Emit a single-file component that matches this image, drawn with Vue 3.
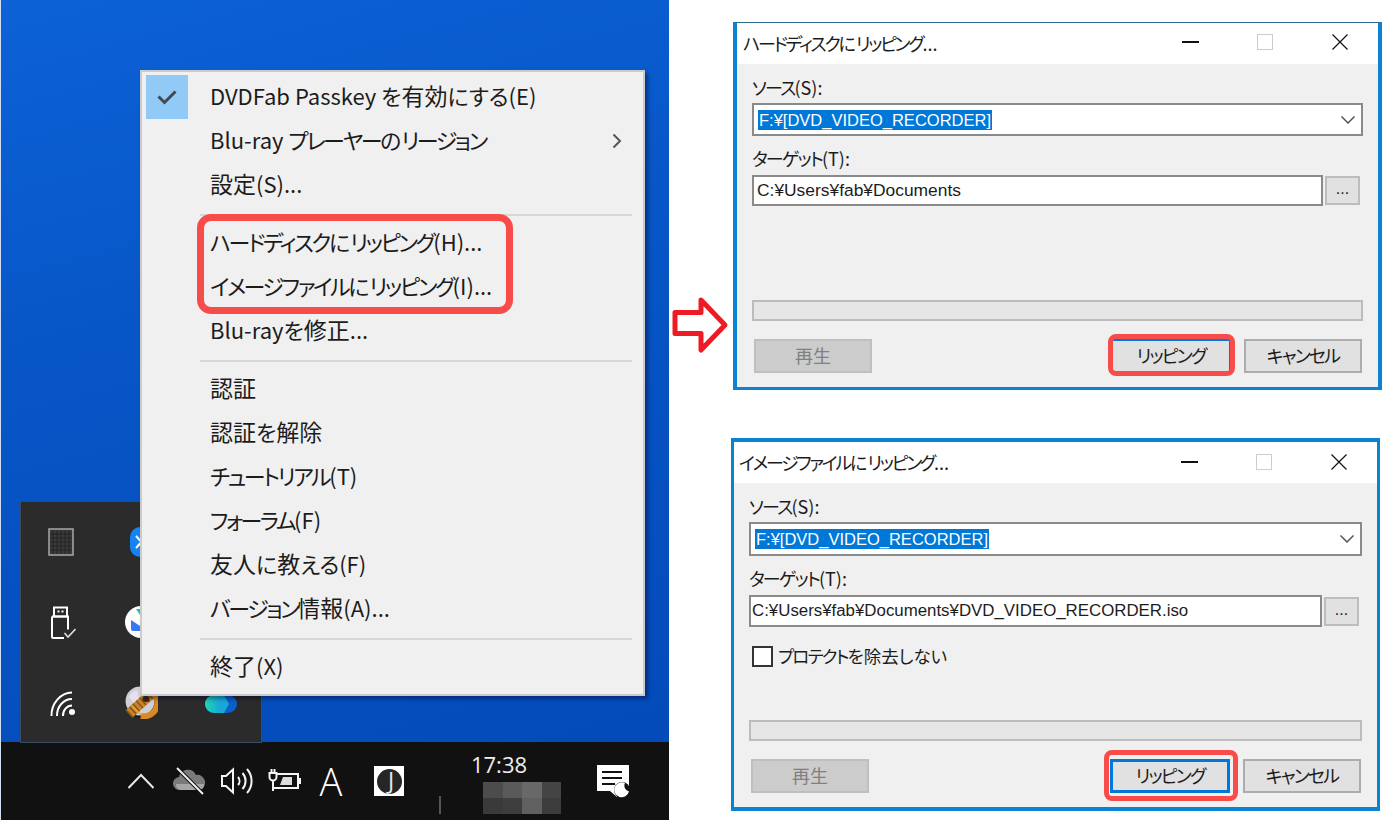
<template>
  <div class="page">
    <!-- デスクトップ側 -->
    <div class="desktop">
      <div class="tray-popup">
        <div class="tray-cell">
          <svg width="26" height="28" viewBox="0 0 26 28">
            <rect x="1" y="1" width="24" height="26" fill="#3a3a3a" stroke="#a8a8a8" stroke-width="1.5" />
            <path d="M5 2v24M9 2v24M13 2v24M17 2v24M21 2v24M2 6h22M2 10h22M2 14h22M2 18h22M2 22h22" stroke="#242424" stroke-width="1" />
          </svg>
        </div>
        <div class="tray-cell">
          <svg width="24" height="32" viewBox="0 0 24 32">
            <rect x="1" y="1" width="22" height="30" rx="10" fill="#1583f2" />
            <path d="M7 10l10 11-5 5V6l5 5L7 22" fill="none" stroke="#fff" stroke-width="2" />
          </svg>
        </div>
        <div class="tray-cell"></div>
        <div class="tray-cell">
          <svg width="30" height="34" viewBox="0 0 30 34" fill="none" stroke="#fff" stroke-width="2">
            <rect x="8" y="2.500" width="13" height="9" />
            <path d="M6 11.500h16v13M18 33H7a1 1 0 0 1-1-1V11.500" />
            <path d="M11.500 6.500h2M15.500 6.500h2" stroke-width="2" />
            <path d="M18.500 28l3.500 4 7.500-8" stroke="#ddd" stroke-width="1.600" />
          </svg>
        </div>
        <div class="tray-cell">
          <svg width="34" height="34" viewBox="0 0 34 34">
            <circle cx="17" cy="17" r="16" fill="#fff" />
            <path d="M7 15l9 6 9-6v9a2 2 0 0 1-2 2H9a2 2 0 0 1-2-2z" fill="#3478f6" />
            <path d="M12 4l6 9 5-9z" fill="#14c8b8" />
          </svg>
        </div>
        <div class="tray-cell"></div>
        <div class="tray-cell">
          <svg width="30" height="30" viewBox="0 0 30 30" fill="none" stroke="#fff" stroke-width="2">
            <path d="M5.500 29A21 23 0 0 1 26 5.500" />
            <path d="M11 29A15 16.500 0 0 1 26 12" />
            <path d="M17 29A9 10 0 0 1 26 18.500" />
            <circle cx="26" cy="25" r="3" fill="#fff" stroke="none" />
          </svg>
        </div>
        <div class="tray-cell">
          <svg width="34" height="34" viewBox="0 0 34 34">
            <circle cx="17" cy="17" r="16" fill="#1c1c1c" />
            <circle cx="16" cy="16" r="14.500" fill="#cfcfd6" />
            <path d="M5 12a12 12 0 0 1 8-7l2 9-5 4z" fill="#e6dff0" />
            <path d="M23 5a13 13 0 0 1-6 26" fill="none" stroke="#d98a24" stroke-width="6" />
            <path d="M5 29L27 9" stroke="#c9832a" stroke-width="10" />
            <path d="M5 29L27 9" stroke="#6b4212" stroke-width="10" stroke-dasharray="1.500 3" opacity="0.7" />
            <path d="M8 21l9 9" stroke="#e3a64a" stroke-width="1.500" />
            <ellipse cx="22" cy="14" rx="3.500" ry="3" fill="#3a2a16" />
          </svg>
        </div>
        <div class="tray-cell">
          <svg width="34" height="22" viewBox="0 0 34 22">
            <defs>
              <linearGradient id="onedrive" x1="0" y1="0" x2="1" y2="0">
                <stop offset="0" stop-color="#1fd8b0" />
                <stop offset="0.6" stop-color="#18a8d8" />
              </linearGradient>
            </defs>
            <rect x="1" y="4" width="32" height="18" rx="9" fill="#0a5fc8" />
            <path d="M10 4h10l5 9-5 9H10a9 9 0 0 1 0-18z" fill="url(#onedrive)" />
          </svg>
        </div>
      </div>

      <!-- 右クリックメニュー -->
      <div class="menu">
        <template v-for="(item, i) in menuItems" :key="i">
          <div v-if="item.sep" class="menu-sep"><div class="menu-sep-line"></div></div>
          <div v-else class="menu-row">
            <div class="menu-check" :class="{ on: item.checked }">
              <svg v-if="item.checked" width="22" height="16" viewBox="0 0 22 16" fill="none" stroke="#3f4a55" stroke-width="3">
                <path d="M2.500 7.500l6 6 11-11" />
              </svg>
            </div>
            <span class="menu-text">
              <span v-for="(run, r) in splitRuns(item.text)" :key="r" :class="run.cls">{{ run.t }}</span>
            </span>
            <svg v-if="item.sub" class="menu-sub" width="10" height="16" viewBox="0 0 10 16" fill="none" stroke="#555" stroke-width="2">
              <path d="M1.500 1.500L8 8l-6.500 6.500" />
            </svg>
          </div>
        </template>
        <div class="menu-mark"></div>
      </div>

      <!-- タスクバー -->
      <div class="taskbar">
        <div class="task-cell">
          <svg width="28" height="16" viewBox="0 0 28 16" fill="none" stroke="#e8e8e8" stroke-width="2">
            <path d="M1.500 15L14 2l12.500 13" />
          </svg>
        </div>
        <div class="task-cell">
          <svg width="34" height="28" viewBox="0 0 34 28">
            <path d="M8 23a6.500 6.500 0 0 1-1-13 9 9 0 0 1 17-2 7.500 7.500 0 0 1 3 15z" fill="#7a7a7a" />
            <path d="M4 17h28a5 5 0 0 1-5 6H8a6 6 0 0 1-4-6z" fill="#a6a6a6" />
            <path d="M5 1l26 26" stroke="#111" stroke-width="4" />
            <path d="M5 1l26 26" stroke="#f2f2f2" stroke-width="2" />
          </svg>
        </div>
        <div class="task-cell">
          <svg width="34" height="28" viewBox="0 0 34 28" fill="none" stroke="#f4f4f4" stroke-width="2">
            <path d="M2 9h4l7-6.500v23L6 19H2z" />
            <path d="M18 10a6 6 0 0 1 0 8" />
            <path d="M22.500 6a12 12 0 0 1 0 16" />
            <path d="M27 2a18 18 0 0 1 0 24" />
          </svg>
        </div>
        <div class="task-cell">
          <svg width="34" height="26" viewBox="0 0 34 26" fill="none" stroke="#f4f4f4" stroke-width="2">
            <path d="M3.500 1v4M6.500 1v4" />
            <path d="M1.500 5h7v4a3.500 3.500 0 0 1-7 0zM5 12.500V23" />
            <path d="M9 6h21v14H5" />
            <path d="M12 17l3-8h9v8z" fill="#dcdcdc" stroke="none" />
            <path d="M32 10v6" />
          </svg>
        </div>
        <div class="task-cell ime-cell">A</div>
        <div class="task-cell j-cell">
          <div class="j-box"><span class="j-disc">J</span></div>
        </div>
        <div class="task-cell clock-cell">
          <span class="clock-time">17:38</span>
          <div class="clock-blur">
            <i v-for="(c, i) in blurCells" :key="i" :style="{ background: c }"></i>
          </div>
          <i class="clock-tick"></i>
        </div>
        <div class="task-cell note-cell">
          <svg width="34" height="34" viewBox="0 0 34 34">
            <path d="M1 1h32v26H22l-1 6-7-6H1z" fill="#fff" />
            <path d="M6 8h20M6 14h20M6 20h13" stroke="#111" stroke-width="2" />
            <circle cx="26" cy="26" r="8" fill="#111" />
            <path d="M29 19A7.500 7.500 0 1 0 33 27.500A6 6 0 0 1 29 19z" fill="#fff" />
          </svg>
        </div>
      </div>
    </div>

    <!-- 矢印 -->
    <div class="arrow-col">
      <svg width="60" height="60" viewBox="0 0 60 60">
        <path d="M5 17.500H31V5L55 30 31 55V38.500H5z" fill="#fff" stroke="#ed1c24" stroke-width="5" stroke-linejoin="round" />
      </svg>
    </div>

    <!-- ダイアログ -->
    <div class="dialogs">
      <div v-for="dlg in dialogs" :key="dlg.id" class="dialog" :class="dlg.id">
        <div class="titlebar">
          <span class="title-text">
            <span v-for="(run, r) in splitRuns(dlg.title)" :key="r" :class="run.cls">{{ run.t }}</span>
          </span>
          <div class="title-buttons">
            <span class="tb"><i class="tb-min"></i></span>
            <span class="tb"><i class="tb-max"></i></span>
            <span class="tb">
              <svg width="16" height="16" viewBox="0 0 16 16" stroke="#111" stroke-width="1.200">
                <path d="M0.500 0.500l15 15M15.500 0.500l-15 15" />
              </svg>
            </span>
          </div>
        </div>
        <div class="body">
          <div class="field-label">
            <span v-for="(run, r) in splitRuns('ソース(S):')" :key="r" :class="run.cls">{{ run.t }}</span>
          </div>
          <div class="combo">
            <span class="combo-sel">F:¥[DVD_VIDEO_RECORDER]</span>
            <svg class="combo-arrow" width="14" height="8" viewBox="0 0 14 8" fill="none" stroke="#555" stroke-width="1.500">
              <path d="M0.500 0.500L7 7l6.500-6.500" />
            </svg>
          </div>
          <div class="field-label second">
            <span v-for="(run, r) in splitRuns('ターゲット(T):')" :key="r" :class="run.cls">{{ run.t }}</span>
          </div>
          <div class="target-row">
            <div class="input">{{ dlg.target }}</div>
            <div class="browse">...</div>
          </div>
          <label v-if="dlg.protect" class="protect">
            <i class="check-box"></i>
            <span>
              <span v-for="(run, r) in splitRuns('プロテクトを除去しない')" :key="r" :class="run.cls">{{ run.t }}</span>
            </span>
          </label>
          <div class="progress"></div>
          <div class="actions">
            <div class="btn disabled">再生</div>
            <div class="btn primary">
              <span class="kata">リッピング</span>
            </div>
            <div class="btn">
              <span class="kata">キャンセル</span>
            </div>
          </div>
        </div>
      </div>
    </div>
  </div>
</template>

<script setup>
const menuItems = [
  { text: "DVDFab Passkey を有効にする(E)", checked: true },
  { text: "Blu-ray プレーヤーのリージョン", sub: true },
  { text: "設定(S)..." },
  { sep: true },
  { text: "ハードディスクにリッピング(H)..." },
  { text: "イメージファイルにリッピング(I)..." },
  { text: "Blu-rayを修正..." },
  { sep: true },
  { text: "認証" },
  { text: "認証を解除" },
  { text: "チュートリアル(T)" },
  { text: "フォーラム(F)" },
  { text: "友人に教える(F)" },
  { text: "バージョン情報(A)..." },
  { sep: true },
  { text: "終了(X)" },
];

// ぼかした日付部分
const blurCells = [
  "#4c4c4c", "#5a5a5a", "#686868", "#444444",
  "#3a3a3a", "#3e3e3e", "#606060", "#3c3c3c",
];

const dialogs = [
  {
    id: "hdd",
    title: "ハードディスクにリッピング...",
    target: "C:¥Users¥fab¥Documents",
    protect: false,
  },
  {
    id: "iso",
    title: "イメージファイルにリッピング...",
    target: "C:¥Users¥fab¥Documents¥DVD_VIDEO_RECORDER.iso",
    protect: true,
  },
];

// カタカナは元の UI フォントより幅が広いので、文字種ごとに分けて詰める
const splitRuns = (text) =>
  text
    .split(/([ァ-ヶー]+|[一-龠]+)/)
    .filter(Boolean)
    .map((t) => ({
      t,
      cls: /[ァ-ヶー]/.test(t) ? "kata" : /[一-龠]/.test(t) ? "cjk" : "",
    }));
</script>

<style>
html,
body {
  margin: 0;
  background: #fff;
}
</style>

<style scoped>
.page {
  display: flex;
  width: 1396px;
  height: 820px;
  overflow: hidden;
  background: #fff;
  font-family: "Noto Sans CJK JP", "Noto Sans", sans-serif;
  font-feature-settings: "palt";
  color: #1c1c1c;
}

.kata {
  letter-spacing: -0.1em;
}

.desktop {
  position: relative;
  flex: none;
  display: flex;
  flex-direction: column;
  justify-content: flex-end;
  width: 668px;
  height: 820px;
  border-left: 1px solid #cfe0f5;
  background: linear-gradient(165deg, #0c62d6 0%, #0755c6 40%, #0449b8 100%);
}

.tray-popup {
  position: absolute;
  left: 20px;
  top: 502px;
  display: grid;
  grid-template-columns: repeat(3, 80px);
  grid-template-rows: repeat(3, 80px);
  background: #2b2b2b;
  box-shadow: 0 0 0 1px #3a4a62;
}

.tray-cell {
  display: flex;
  align-items: center;
  justify-content: center;
}

.menu {
  position: absolute;
  z-index: 2;
  left: 139px;
  top: 70px;
  box-sizing: border-box;
  width: 505px;
  height: 626px;
  padding: 3px 0 5px;
  border: 2px solid #cbcbcb;
  background: #f0f0f0;
  box-shadow: 3px 3px 4px rgba(0, 0, 40, 0.4);
}

.menu-row {
  display: flex;
  align-items: center;
  height: 44px;
  padding-left: 4px;
}

.menu-check {
  flex: none;
  display: flex;
  align-items: center;
  justify-content: center;
  width: 42px;
  height: 44px;
  margin-right: 22px;
}

.menu-check.on {
  background: #91c9f7;
}

.menu-text {
  padding-bottom: 4px;
  font-size: 22px;
  white-space: nowrap;
}

.menu-text .cjk {
  font-size: 23px;
}

.menu-text .kata {
  letter-spacing: -0.11em;
}

.menu-sub {
  margin-left: auto;
  margin-right: 21px;
}

.menu-sep {
  box-sizing: border-box;
  display: flex;
  align-items: center;
  height: 14px;
  padding: 2px 11px 0 58px;
}

.menu-sep-line {
  flex: 1;
  height: 2px;
  background: #d7d7d7;
}

.menu-mark {
  position: absolute;
  left: 55px;
  top: 142px;
  box-sizing: border-box;
  width: 316px;
  height: 100px;
  border: 7px solid #f84c4a;
  border-radius: 14px;
}

.taskbar {
  display: flex;
  align-items: center;
  height: 78px;
  padding-left: 116px;
  background: #111;
  color: #fff;
}

.task-cell {
  position: relative;
  flex: none;
  display: flex;
  align-items: center;
  justify-content: center;
  width: 48px;
  height: 78px;
}

.ime-cell {
  width: 44px;
  font-family: "Open Sans", sans-serif;
  font-weight: 300;
  font-size: 38px;
}

.j-cell {
  width: 72px;
}

.j-box {
  display: flex;
  align-items: center;
  justify-content: center;
  width: 30px;
  height: 30px;
  background: #fff;
}

.j-disc {
  box-sizing: border-box;
  width: 25px;
  height: 25px;
  padding-left: 4px;
  border-radius: 50%;
  background: #262626;
  color: #e8e8e8;
  font-family: "Open Sans", sans-serif;
  font-size: 23px;
  line-height: 22px;
  text-align: center;
}

.clock-cell {
  flex-direction: column;
  justify-content: flex-start;
  width: 148px;
}

.clock-time {
  margin-top: 8px;
  height: 32px;
  font-family: "Open Sans", sans-serif;
  font-size: 22px;
  line-height: 29px;
  color: #eee;
}

.clock-blur {
  display: grid;
  grid-template-columns: repeat(4, 1fr);
  grid-template-rows: 16px 16px;
  width: 78px;
  margin-left: 46px;
  filter: blur(0.6px);
}

.clock-tick {
  position: absolute;
  left: 14px;
  top: 54px;
  width: 2px;
  height: 18px;
  background: #555;
}

.note-cell {
  width: 80px;
}

.arrow-col {
  flex: none;
  box-sizing: border-box;
  width: 64px;
  padding: 295px 0 0 1px;
}

.dialogs {
  flex: none;
}

.dialog {
  box-sizing: border-box;
  display: flex;
  flex-direction: column;
  width: 649px;
  background: #f0f0f0;
}

.dialog.hdd {
  height: 368px;
  margin-top: 22px;
  border: solid #0a84d0;
  border-width: 1px 4px 3px;
  border-top-color: #2d6a8e;
}

.dialog.iso {
  height: 373px;
  margin-top: 48px;
  margin-left: -2px;
  border: solid #0a84d0;
  border-width: 4px 3px 4px;
}

.titlebar {
  flex: none;
  display: flex;
  align-items: center;
  height: 41px;
  background: #fff;
}

.hdd .titlebar {
  padding-left: 6px;
}

.iso .titlebar {
  padding-left: 5px;
}

.title-text {
  padding-bottom: 2px;
  font-size: 18px;
  white-space: nowrap;
}

.title-text .kata {
  letter-spacing: -0.125em;
}

.title-buttons {
  display: flex;
  margin-left: auto;
  padding: 0 1px 3px 0;
}

.iso .title-buttons {
  padding-bottom: 2px;
}

.tb {
  display: flex;
  align-items: center;
  justify-content: center;
  width: 75px;
  height: 38px;
}

.tb-min {
  width: 17px;
  height: 2px;
  background: #111;
  transform: translateX(1px);
}

.tb-max {
  box-sizing: border-box;
  width: 16px;
  height: 16px;
  border: 1px solid #ccc;
}

.body {
  flex: 1;
  display: flex;
  flex-direction: column;
  padding: 0 15px;
}

.field-label {
  height: 39px;
  box-sizing: border-box;
  padding-top: 11px;
  font-size: 18px;
  line-height: 24px;
}

.field-label.second {
  height: 39px;
  padding-top: 10px;
}

.combo {
  position: relative;
  flex: none;
  display: flex;
  align-items: center;
  box-sizing: border-box;
  height: 33px;
  padding-left: 4px;
  border: 2px solid #8a8a8a;
  background: #fff;
}

.iso .combo {
  height: 34px;
  padding-left: 4px;
}

.combo-sel {
  padding: 0 1px;
  background: #0078d7;
  color: #fff;
  font-family: "Liberation Sans", sans-serif;
  font-size: 16.500px;
  line-height: 20px;
  white-space: nowrap;
}

.combo-arrow {
  margin-left: auto;
  margin-right: 6px;
}

.target-row {
  flex: none;
  display: flex;
  align-items: center;
  gap: 2px;
  padding-right: 3px;
}

.input {
  flex: 1;
  box-sizing: border-box;
  height: 31px;
  padding-left: 3px;
  border: 2px solid #8a8a8a;
  background: #fff;
  font-family: "Liberation Sans", sans-serif;
  font-size: 17.400px;
  line-height: 27px;
  white-space: nowrap;
}

.iso .input {
  height: 32px;
  padding-left: 1px;
  font-size: 16.850px;
}

.browse {
  flex: none;
  box-sizing: border-box;
  width: 35px;
  height: 29px;
  border: 2px solid #bdbdbd;
  background: #e1e1e1;
  font-family: "Liberation Sans", sans-serif;
  font-size: 16px;
  line-height: 22px;
  text-align: center;
}

.protect {
  display: flex;
  align-items: center;
  gap: 5px;
  height: 21px;
  margin: 19px 0 0 3px;
  font-size: 17.500px;
}

.protect > span {
  padding-bottom: 3px;
}

.check-box {
  flex: none;
  box-sizing: border-box;
  width: 21px;
  height: 21px;
  border: 2px solid #333;
  background: #fff;
}

.progress {
  flex: none;
  box-sizing: border-box;
  height: 21px;
  margin-top: auto;
  border: 2px solid #bcbcbc;
  background: #e6e6e6;
}

.actions {
  flex: none;
  display: flex;
  gap: 13px;
  margin: 18px 1px 14px 2px;
}

.btn {
  box-sizing: border-box;
  width: 118px;
  height: 34px;
  border: 2px solid #adadad;
  background: #e1e1e1;
  font-size: 18px;
  line-height: 28px;
  text-align: center;
}

.btn.disabled {
  margin-right: auto;
  border-color: #bfbfbf;
  background: #cccccc;
  color: #808080;
}

.btn.primary {
  position: relative;
  width: 120px;
  border: 2px solid #0078d7;
}

.iso .btn.primary {
  border-width: 3px;
  line-height: 26px;
}

.btn.primary::after {
  content: "";
  position: absolute;
  left: -5px;
  right: -6px;
  top: -7px;
  bottom: -5px;
  border: 5px solid #f84c4a;
  border-radius: 8px;
}

.iso .btn.primary::after {
  left: -9px;
  right: -11px;
  top: -12px;
  bottom: -11px;
  border-width: 5px;
}
</style>
